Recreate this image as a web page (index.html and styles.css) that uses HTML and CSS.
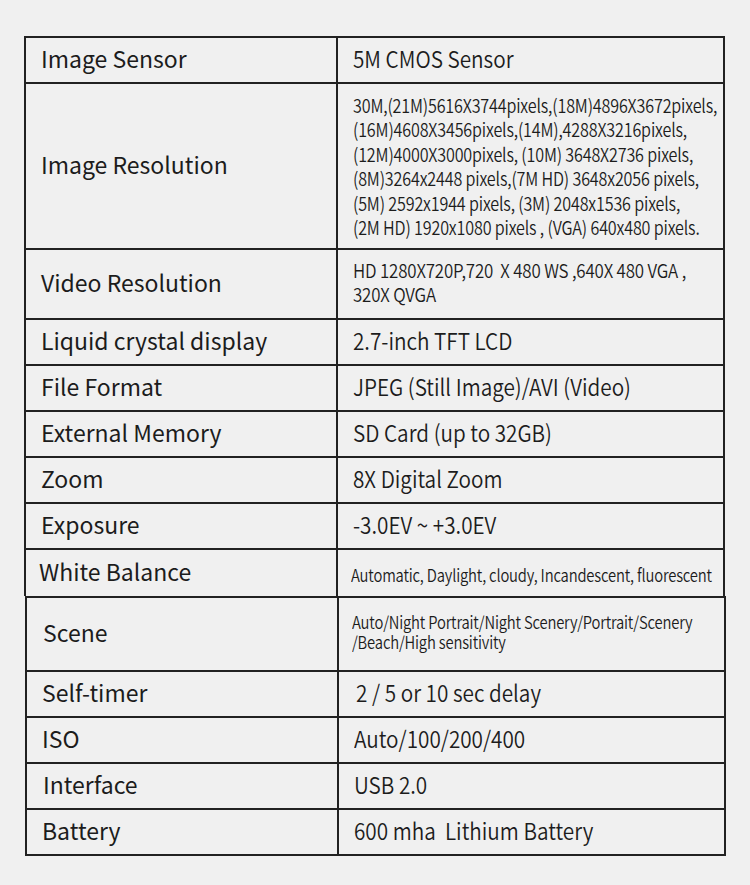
FILE: index.html
```html
<!DOCTYPE html>
<html>
<head>
<meta charset="utf-8">
<link rel="stylesheet" href="styles.css">
</head>
<body>
<div class="sheet">
  <div class="table top">
    <div class="row h46"><div class="label">Image Sensor</div><div class="value"><span class="t lg">5M CMOS Sensor</span></div></div>
    <div class="row h166"><div class="label">Image Resolution</div><div class="value"><span class="t md res">30M,(21M)5616X3744pixels,(18M)4896X3672pixels,<br>(16M)4608X3456pixels,(14M),4288X3216pixels,<br>(12M)4000X3000pixels, (10M) 3648X2736 pixels,<br>(8M)3264x2448 pixels,(7M HD) 3648x2056 pixels,<br>(5M) 2592x1944 pixels, (3M) 2048x1536 pixels,<br>(2M HD) 1920x1080 pixels , (VGA) 640x480 pixels.</span></div></div>
    <div class="row h70"><div class="label">Video Resolution</div><div class="value up"><span class="t vd vid">HD 1280X720P,720 &nbsp;X 480 WS ,640X 480 VGA ,<br>320X QVGA</span></div></div>
    <div class="row h46"><div class="label">Liquid crystal display</div><div class="value"><span class="t lg">2.7-inch TFT LCD</span></div></div>
    <div class="row h46"><div class="label">File Format</div><div class="value"><span class="t lg">JPEG (Still Image)/AVI (Video)</span></div></div>
    <div class="row h46"><div class="label">External Memory</div><div class="value"><span class="t lg">SD Card (up to 32GB)</span></div></div>
    <div class="row h46"><div class="label">Zoom</div><div class="value"><span class="t lg">8X Digital Zoom</span></div></div>
    <div class="row h46"><div class="label">Exposure</div><div class="value"><span class="t lg">-3.0EV ~ +3.0EV</span></div></div>
    <div class="row h46 last"><div class="label wb">White Balance</div><div class="value low"><span class="t sm">Automatic, Daylight, cloudy, Incandescent, fluorescent</span></div></div>
  </div>
  <div class="table bottom">
    <div class="row h74"><div class="label sc">Scene</div><div class="value tight up"><span class="t sm scene">Auto/Night Portrait/Night Scenery/Portrait/Scenery<br>/Beach/High sensitivity</span></div></div>
    <div class="row h46"><div class="label">Self-timer</div><div class="value wide"><span class="t lg">2 / 5 or 10 sec delay</span></div></div>
    <div class="row h46"><div class="label">ISO</div><div class="value"><span class="t lg">Auto/100/200/400</span></div></div>
    <div class="row h46"><div class="label sc">Interface</div><div class="value"><span class="t lg">USB 2.0</span></div></div>
    <div class="row h44 last"><div class="label">Battery</div><div class="value"><span class="t lg">600 mha &nbsp;Lithium Battery</span></div></div>
  </div>
</div>
</body>
</html>
```
FILE: styles.css
```css
html, body {
  margin: 0;
  padding: 0;
  background: #f0f0f0;
}
body {
  font-family: "Noto Sans CJK SC", "Noto Sans", sans-serif;
  color: #1c1c1c;
}
.sheet {
  padding-top: 36px;
  height: 849px;
}
.table {
  border: 2px solid #222;
  box-sizing: border-box;
}
.table.top {
  margin-left: 24px;
  width: 701px;
  border-bottom: none;
}
.table.bottom {
  margin-left: 25px;
  width: 701px;
}
.row {
  display: grid;
  grid-template-columns: 312px 1fr;
  border-bottom: 2px solid #222;
  box-sizing: border-box;
}
.row.last {
  border-bottom: none;
}
.h44 { height: 44px; }
.h46 { height: 46px; }
.h166 { height: 166px; }
.h70 { height: 70px; }
.h74 { height: 74px; }
.label {
  border-right: 2px solid #222;
  display: flex;
  align-items: center;
  padding-left: 15px;
  padding-bottom: 3px;
  font-size: 23px;
  line-height: 1;
  white-space: nowrap;
}
.label.wb { padding-left: 13px; }
.label.sc { padding-left: 16px; }
.value {
  display: flex;
  align-items: center;
  padding-left: 15px;
  overflow: hidden;
}
.value.up { padding-bottom: 4px; }
.value.low { padding-top: 3px; padding-left: 13px; }
.value.tight { padding-left: 13px; }
.value.wide { padding-left: 17px; }
.t {
  display: inline-block;
  white-space: nowrap;
  transform-origin: left center;
  font-weight: 350;
}
.lg { font-size: 23px; line-height: 1; transform: scaleX(0.9); padding-bottom: 3px; }
.md { font-size: 19px; transform: scaleX(0.85); letter-spacing: -0.2px; }
.vd { font-size: 19px; transform: scaleX(0.89); letter-spacing: -0.2px; }
.sm { font-size: 17px; transform: scaleX(0.87); letter-spacing: -0.2px; }
.res { line-height: 24.5px; }
.vid { line-height: 24px; }
.scene { line-height: 20px; }
```
